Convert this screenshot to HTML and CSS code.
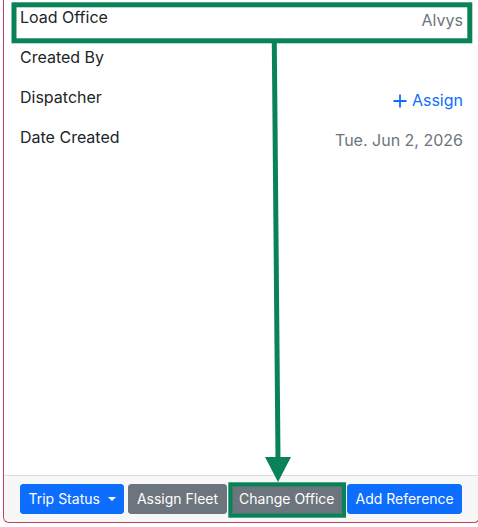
FILE: index.html
```html
<!DOCTYPE html>
<html lang="en">
<head>
<meta charset="utf-8">
<title>Load details</title>
<link rel="stylesheet" href="styles.css">
</head>
<body>
<div class="card">
  <div class="card-body">
    <div class="row">
      <span class="label">Load Office</span>
      <span class="value">Alvys</span>
    </div>
    <div class="row">
      <span class="label">Created By</span>
      <span class="value"></span>
    </div>
    <div class="row">
      <span class="label">Dispatcher</span>
      <a class="value assign" href="#">
        <svg class="plus" width="14" height="14" viewBox="0 0 14 14"><path d="M7 0.5V13.5M0.5 7H13.5" stroke="currentColor" stroke-width="1.8" fill="none"/></svg>
        <span>Assign</span>
      </a>
    </div>
    <div class="row">
      <span class="label">Date Created</span>
      <span class="value">Tue. Jun 2, 2026</span>
    </div>
  </div>
  <div class="card-footer">
    <button class="btn btn-primary">Trip Status<span class="caret"></span></button>
    <button class="btn btn-secondary">Assign Fleet</button>
    <button class="btn btn-secondary">Change Office</button>
    <button class="btn btn-primary">Add Reference</button>
  </div>
</div>
<svg class="annotation" width="478" height="527" viewBox="0 0 478 527">
  <rect x="14" y="4.8" width="455.8" height="36" fill="none" stroke="#0a8257" stroke-width="5"/>
  <line x1="274.3" y1="43" x2="278" y2="459" stroke="#0a8257" stroke-width="5"/>
  <polygon points="265,457 291,457 278,482" fill="#0a8257"/>
  <rect x="230.4" y="484.4" width="113.5" height="31.2" fill="none" stroke="#0a8257" stroke-width="4.2"/>
</svg>
</body>
</html>
```
FILE: styles.css
```css
html, body {
  margin: 0;
  padding: 0;
  overflow: hidden;
  background: #fff;
}
body {
  font-family: Inter, "Noto Sans", sans-serif;
  color: #212529;
  width: 478px;
  height: 527px;
  position: relative;
}
.card {
  box-sizing: border-box;
  margin-left: 3px;
  width: 477px;
  height: 523px;
  border: 1px solid #c0405e;
  border-top: none;
  border-radius: 0 0 6px 6px;
  display: flex;
  flex-direction: column;
  background: #fff;
}
.card-body {
  flex: 1;
  padding: 5px 16px 0 16px;
}
.row {
  display: flex;
  justify-content: space-between;
  align-items: flex-start;
  height: 40px;
  font-size: 16px;
  line-height: 24px;
}
.label {
  color: #212529;
}
.value {
  color: #6c757d;
  padding-top: 3px;
}
.assign {
  color: #0d6efd;
  text-decoration: none;
  display: flex;
  align-items: center;
  gap: 5px;
}
.plus {
  display: block;
  margin-top: 1px;
}
.card-footer {
  border-top: 1px solid #dcdcdc;
  background: #f7f7f7;
  padding: 8px 16px;
  display: flex;
  justify-content: flex-start;
  gap: 4px;
  border-radius: 0 0 6px 6px;
}
.btn {
  font-family: Inter, "Noto Sans", sans-serif;
  font-size: 14px;
  line-height: 20px;
  padding: 4px 7.5px;
  border: 1px solid transparent;
  border-radius: 3px;
  color: #fff;
  display: inline-flex;
  align-items: center;
  white-space: nowrap;
  flex-shrink: 0;
  cursor: pointer;
}
.btn-primary {
  background: #0d6efd;
  border-color: #0d6efd;
}
.btn-secondary {
  background: #6c757d;
  border-color: #6c757d;
}
.caret {
  display: inline-block;
  margin-left: 8px;
  width: 0;
  height: 0;
  border-top: 4.5px solid #fff;
  border-left: 4.5px solid transparent;
  border-right: 4.5px solid transparent;
}
.annotation {
  position: absolute;
  left: 0;
  top: 0;
  pointer-events: none;
}
```
